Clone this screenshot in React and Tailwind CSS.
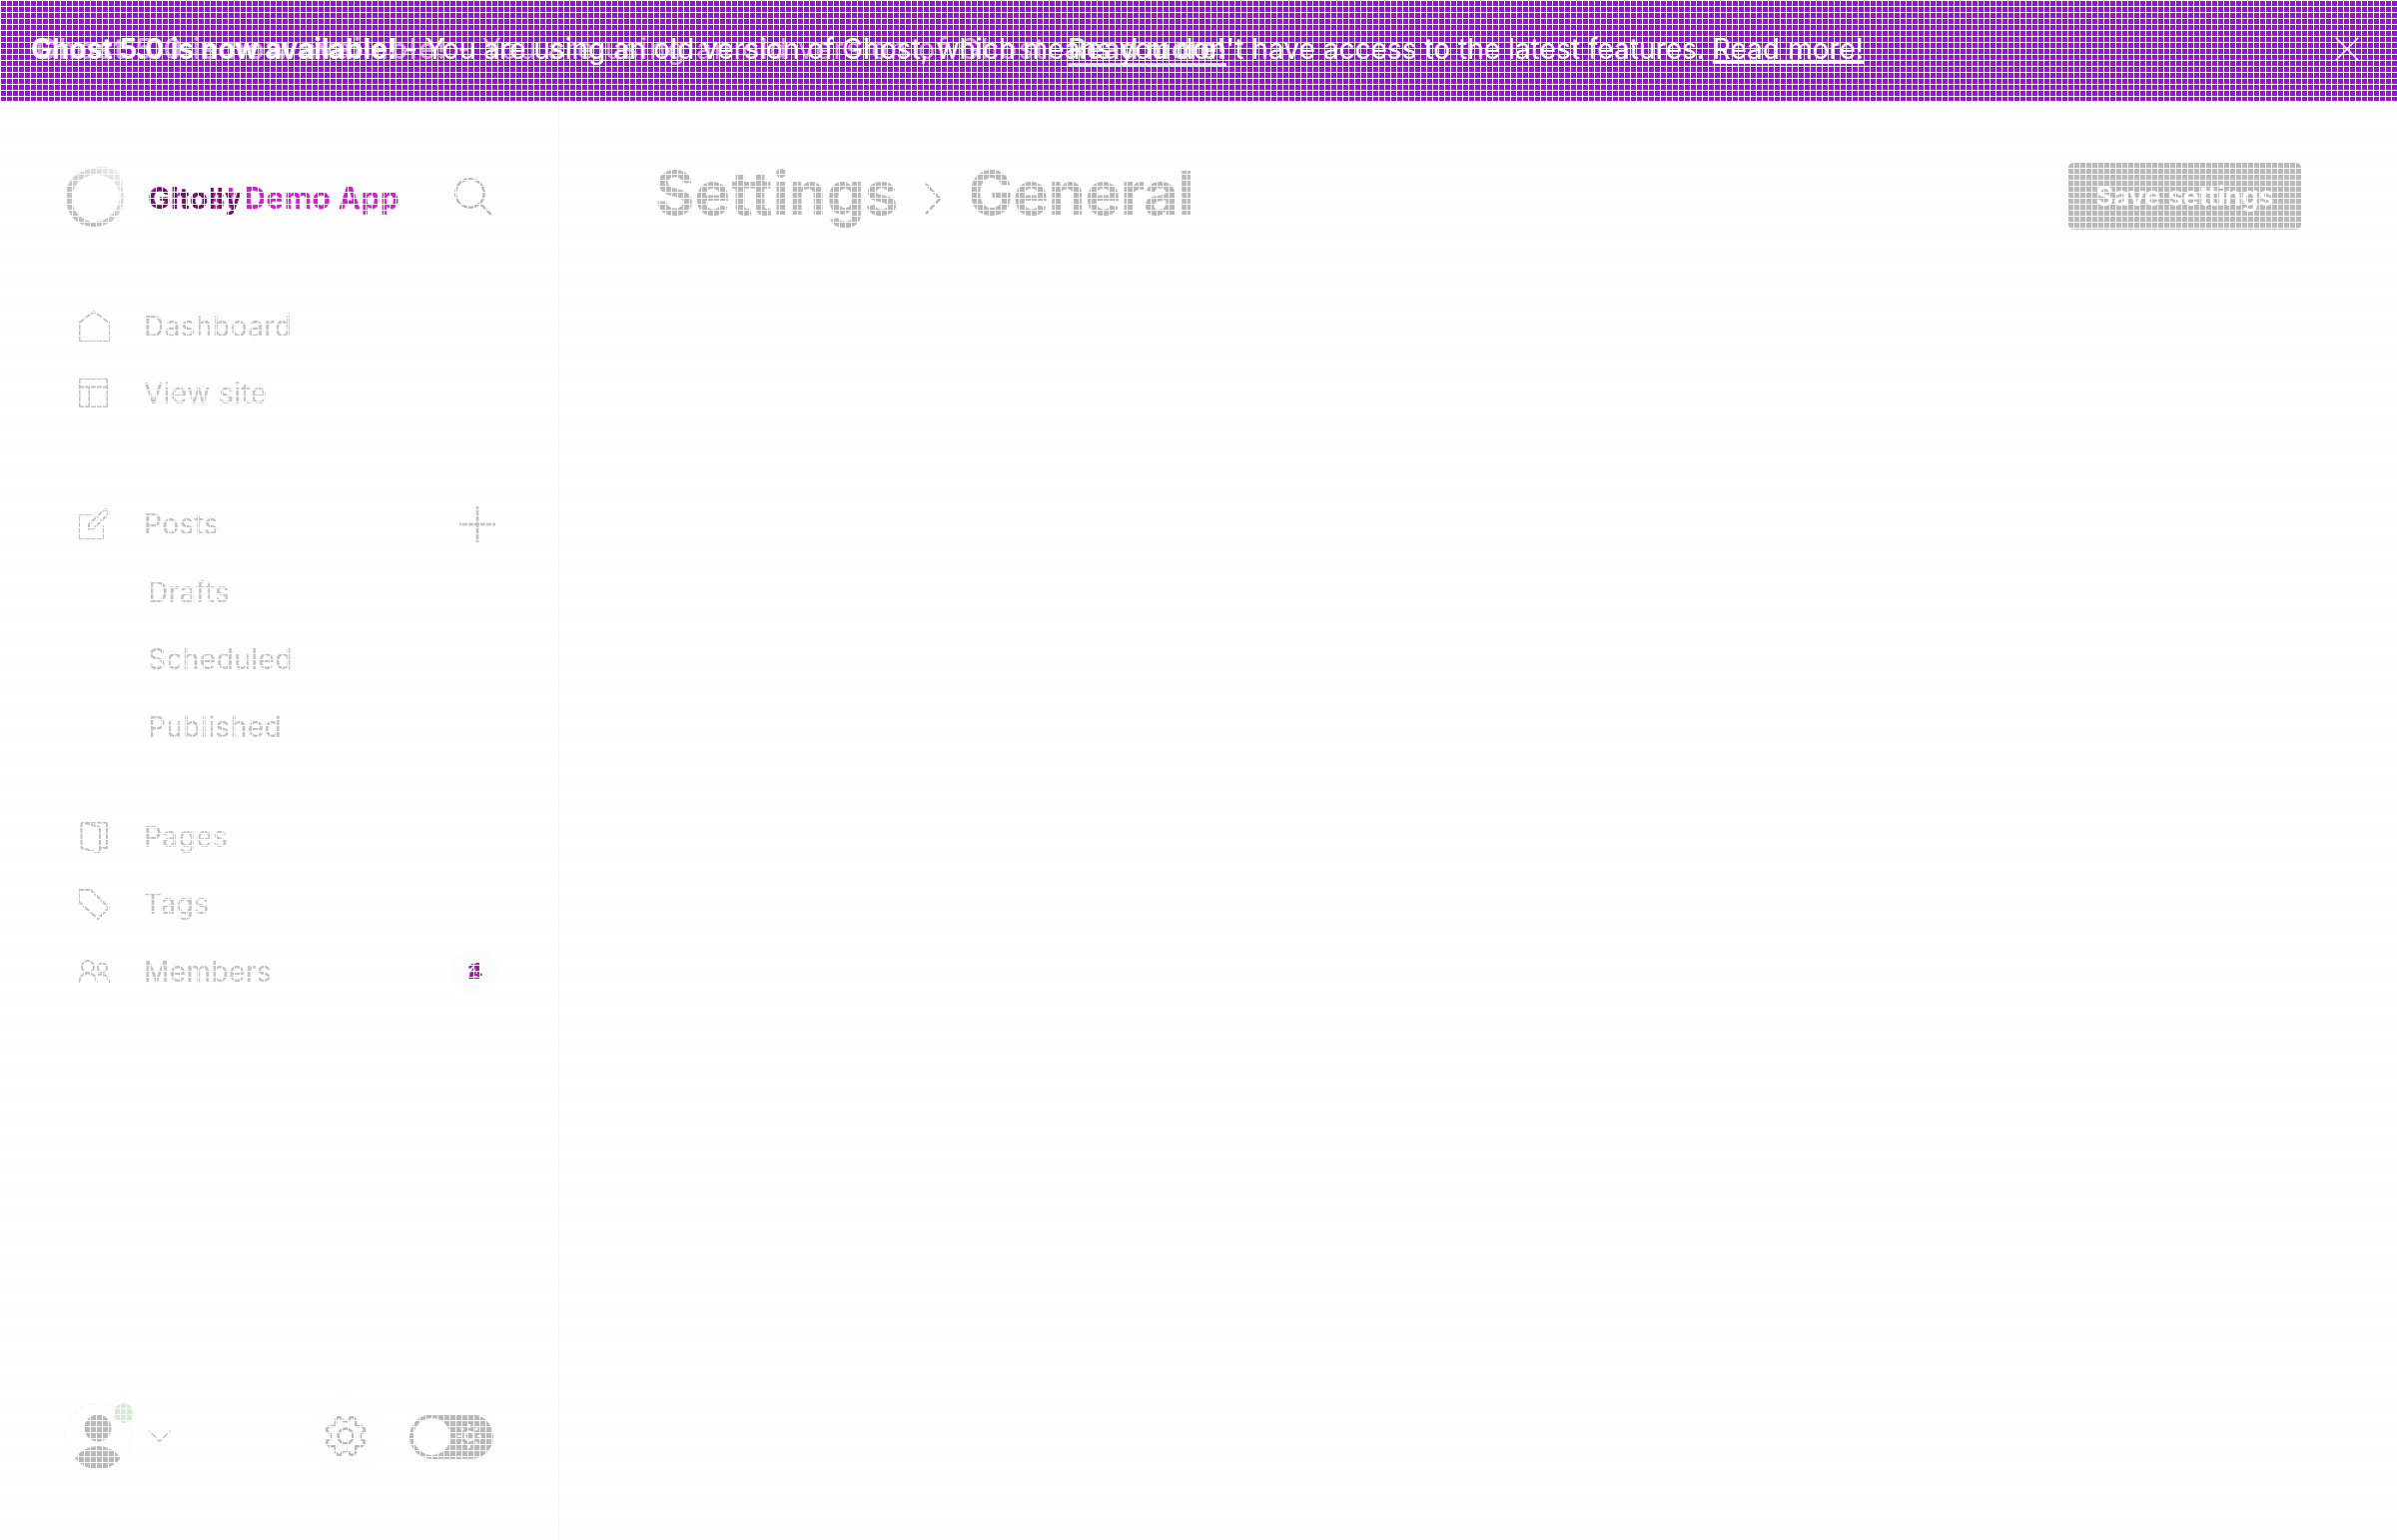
const NAV = 'flex h-[67.4px] items-center text-[28px] text-[#c2c2c2] tracking-[0.45px]';

function Icon({ children, w = 32, h = 32, sw = 2, className = '' }) {
  return (
    <svg width={w} height={h} viewBox="0 0 32 32" fill="none" stroke="currentColor" strokeWidth={sw} strokeLinejoin="round" className={`shrink-0 ${className}`}>
      {children}
    </svg>
  );
}

function NavItem({ icon, label, children }) {
  return (
    <div className={NAV}>
      <Icon>{icon}</Icon>
      <span className="ml-[34px]">{label}</span>
      <span className="ml-auto">{children}</span>
    </div>
  );
}

const HomeIcon = <path d="M1.500 12 L16 1 L31 12 V31 H1.500 Z" />;
const SiteIcon = <path d="M2.500 1 H28 L29.500 2.500 V29.500 H1.500 V2 Z M1.500 9.500 H29 M11.500 9.500 V29" />;
const PostIcon = <path d="M14 7 H1 V31 H25 V17 M11 16 L26 2 Q28 .5 30 2.500 Q31 4 30 6 L16 20 L11 21 Z" />;
const PagesIcon = <path d="M5 1.500 H28 Q29 2 29 4 V27 H23 M5 1.500 Q3.500 1.500 3.500 3 V27 L19.500 31.500 Q22 32 22 30 V8 Q22 6 20 5.500 L6 2" />;
const TagIcon = <path d="M1 2 H13 L31 20 L20 31 L1 14 Z" />;
const MembersIcon = <path d="M16 11 A6 6 0 1 1 4 11 A6 6 0 1 1 16 11 M29 12 A4.500 4.500 0 1 1 20 12 A4.500 4.500 0 1 1 29 12 M1 27 Q2 17.500 10 17.500 Q18 17.500 19 27 M20 19 Q30 17 31.500 27" />;

export default function App() {
  return (
    <div className="relative flex h-[1542px] w-[2400px] flex-col overflow-hidden bg-[#fefefe] font-['Inter',sans-serif]">
      <header className="relative flex h-[101px] items-center bg-[#aa00ff] pl-[31px] pr-[38px] pb-[3px] text-[28px] text-white">
        <div className="absolute top-[29px] left-[36px] flex w-[1192px] whitespace-nowrap text-[28px] leading-[40px] tracking-[1.9px] text-[#ee88ff]">
          <span><b className="font-semibold">Ghost 5.0 is now available!</b> - You are using an old version of Ghost.</span>
          <span className="ml-auto font-semibold tracking-[0.5px] text-[#e0e0e0] underline decoration-[3px] underline-offset-[4px]">Read more!</span>
        </div>
        <p className="relative whitespace-nowrap tracking-[0.03px]"><b className="font-bold">Ghost 5.0 is now available!</b> - You are using an old version of Ghost, which means you don't have access to the latest features. <u className="decoration-[3px]">Read more!</u></p>
        <Icon w={24} h={24} className="ml-auto"><path d="M1 1 L31 31 M31 1 L1 31" /></Icon>
      </header>

      <div className="flex min-h-0 flex-1">
        <aside className="flex w-[560px] flex-col border-r border-[#f2f2f2]">
          <div className="mt-[62px] flex h-[68px] items-center pl-[65px] pr-[66px]">
            <svg width="62" height="62" viewBox="0 0 62 62" className="shrink-0">
              <defs>
                <linearGradient id="ring" x1="0" y1="1" x2="1" y2="0"><stop offset="0.3" stopColor="#c0c0c0" /><stop offset="1" stopColor="#f0f0f0" /></linearGradient>
              </defs>
              <path fillRule="evenodd" fill="url(#ring)" d="M36 1 C51 0 59 9 58 24 C63 43 49 61 30 61 C12 61 0 49 1 28 C2 10 19 3 36 1 Z M32 9 C17 9 7 20 7 33 C8 47 18 56 30 56 C44 56 55 43 55 30 C53 17 46 10 32 9 Z" />
            </svg>
            <div className="relative top-[1px] ml-[21px] text-[30px] font-bold whitespace-nowrap tracking-[0.35px] text-[#ff00ff]">
              <span>Ghost Demo App</span>
              <span className="absolute top-0 left-[1px] text-[29px] leading-[45px] font-semibold tracking-[0.6px] text-[#880088]">Gitolly</span>
            </div>
            <Icon w={38} h={38} sw={2} className="ml-auto text-[#b8b8b8]"><path d="M25 13 A12 12 0 1 1 1 13 A12 12 0 1 1 25 13 M22 22 L31 31" /></Icon>
          </div>

          <nav className="mt-[62px] pl-[78px] pr-[62px]">
            <NavItem icon={HomeIcon} label="Dashboard" />
            <NavItem icon={SiteIcon} label="View site" />
            <div className="h-[64px]" />
            <NavItem icon={PostIcon} label="Posts"><Icon w={36} h={36} sw={2.3} className="mr-[1px]"><path d="M16 0 V32 M0 16 H32" /></Icon></NavItem>
            <div className={`${NAV} pl-[70px]`}>Drafts</div>
            <div className={`${NAV} pl-[70px]`}>Scheduled</div>
            <div className={`${NAV} pl-[70px]`}>Published</div>
            <div className="h-[43px]" />
            <NavItem icon={PagesIcon} label="Pages" />
            <NavItem icon={TagIcon} label="Tags" />
            <NavItem icon={MembersIcon} label="Members">
              <span className="relative -mr-[1px] flex size-[46px] items-center justify-center rounded-full bg-[#fafbfb] pl-[3px] text-[22px] font-semibold text-[#dd00dd]">
                4
                <span className="absolute top-[8px] left-[16px] text-[20px] text-[#aa00bb]">2</span>
              </span>
            </NavItem>
          </nav>

          <div className="mt-auto mb-[64px] flex h-[80px] items-center pl-[64px] pr-[65px]">
            <div className="relative size-[68px] shrink-0 rounded-full border-2 border-[#f8f8f8]">
              <svg width="64" height="64" viewBox="0 0 64 64" fill="#b9b9b9"><circle cx="32" cy="24" r="13.500" /><path d="M9 54 Q18 42 32 42 Q46 42 55 54 Q46 65 32 65 Q18 65 9 54" /></svg>
              <i className="absolute -top-[1px] -right-[4px] size-5 rounded-full bg-[#cfeecb]" />
            </div>
            <Icon w={24} h={24} sw={2} className="ml-4 text-[#c4c4c4]"><path d="M2 9 L16 23 L30 9" /></Icon>
            <div className="ml-auto flex size-[78px] items-center justify-center rounded-full bg-[#fdfdfd] text-[#b8b8b8]">
              <Icon w={40} h={40} sw={2}><circle cx="16" cy="16" r="6" /><path d="M8 3 Q10 0 12 1 L14 4 H18 L20 1 Q22 0 24 3 V8 H29 Q32 10 31 12 L28 14 V18 L31 20 Q32 22 29 24 H24 V29 Q22 32 20 31 L18 28 H14 L12 31 Q10 32 8 29 V24 H3 Q0 22 1 20 L4 18 V14 L1 12 Q0 10 3 8 H8 Z" /></Icon>
            </div>
            <div className="ml-[25px] flex h-[45px] w-[84px] items-center justify-between rounded-full bg-[#b9b9b9] pl-1 pr-3">
              <span className="size-[37px] rounded-full bg-[#fefefe]" />
              <Icon w={24} h={24} sw={2.5} className="text-white"><circle cx="16" cy="16" r="6" /><path d="M16 0 V5 M16 27 V32 M0 16 H5 M27 16 H32 M5 5 L8 8 M24 24 L27 27 M27 5 L24 8 M5 27 L8 24" /></Icon>
            </div>
          </div>
        </aside>

        <main className="flex flex-1 items-start pr-24 pl-[96px] pt-[50px] text-[#b9b9b9]">
          <h1 className="flex h-[84px] items-center text-[60px] font-bold">
            <span className="tracking-[0.2px]">Settings</span>
            <svg width="18" height="34" viewBox="0 0 18 34" fill="none" stroke="currentColor" strokeWidth="2.500" className="mt-3 mr-[27px] ml-[25px]"><path d="M2 2 L16 17 L2 32" /></svg>
            <span className="tracking-[-0.4px]">General</span>
          </h1>
          <button className="mt-[12px] ml-auto h-[67px] w-[233px] rounded-[5px] bg-[#b9b9b9] text-[27.500px] font-semibold text-white">Save settings</button>
        </main>
      </div>

      <div className="pointer-events-none absolute inset-0 bg-[linear-gradient(to_right,white_1px,transparent_1px),linear-gradient(to_bottom,white_1px,transparent_1px)] bg-[size:6px_6px]" />
    </div>
  );
}
